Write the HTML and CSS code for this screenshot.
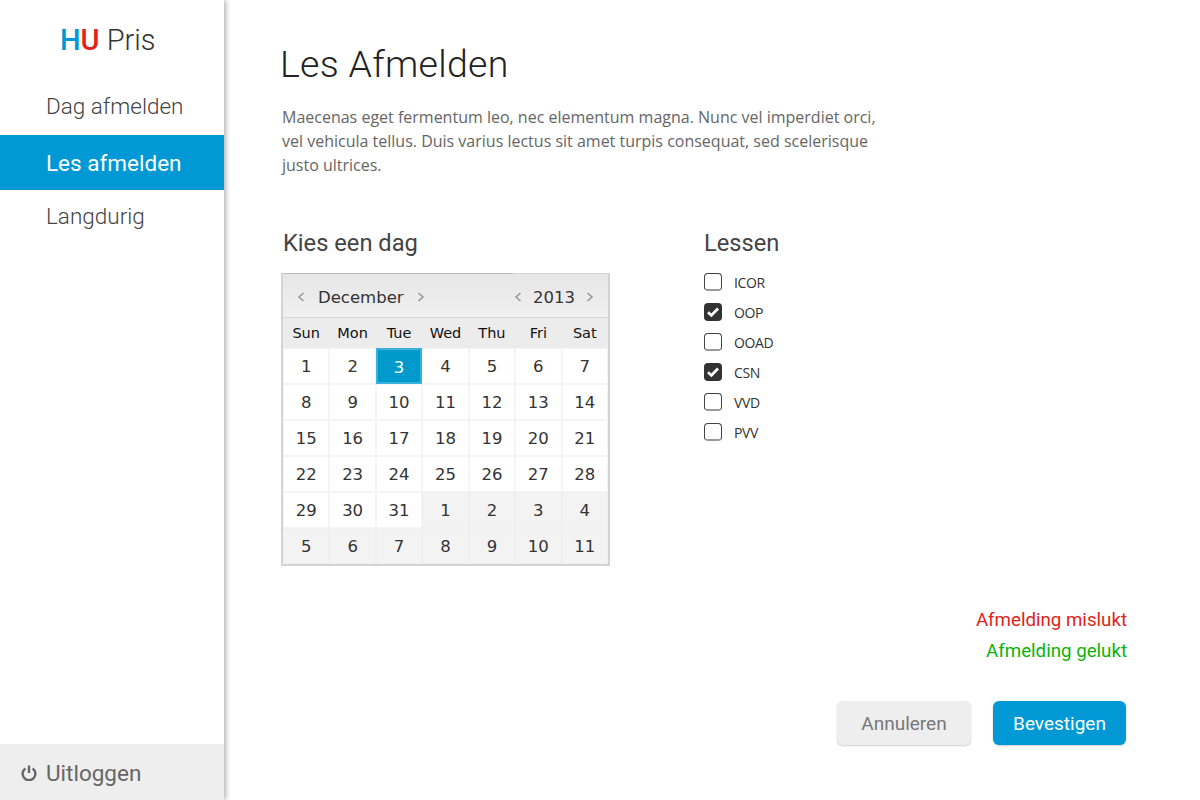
FILE: index.html
```html
<!DOCTYPE html>
<html lang="nl">
<head>
    <meta charset="UTF-8">
    <title>HU Pris - Les afmelden</title>
    <link rel="stylesheet" href="styles.css">
</head>
<body>
    <aside class="sidebar">
        <div class="logo"><span class="logo-h">H</span><span class="logo-u">U</span> Pris</div>
        <nav class="nav">
            <a class="nav-item" href="#">Dag afmelden</a>
            <a class="nav-item active" href="#">Les afmelden</a>
            <a class="nav-item" href="#">Langdurig</a>
        </nav>
        <a class="logout" href="#">
            <svg class="logout-icon" viewBox="0 0 16 16" width="16" height="16">
                <path d="M4.4 3.4a6.4 6.4 0 1 0 7.2 0" fill="none" stroke="#666" stroke-width="2.4"/>
                <path d="M8 0.5v7.5" fill="none" stroke="#666" stroke-width="2.4"/>
            </svg>
            Uitloggen
        </a>
    </aside>
    <main class="main">
        <h1 class="title">Les Afmelden</h1>
        <p class="intro">Maecenas eget fermentum leo, nec elementum magna. Nunc vel imperdiet orci, vel vehicula tellus. Duis varius lectus sit amet turpis consequat, sed scelerisque justo ultrices.</p>
        <div class="columns">
            <section class="col-date">
                <h2 class="sub">Kies een dag</h2>
                <div class="calendar">
                    <div class="cal-head">
                        <div class="cal-nav">
                            <svg class="chev" viewBox="0 0 8 10" width="8" height="10"><path d="M6.5 1L2 5l4.5 4" fill="none" stroke="#999" stroke-width="1.6"/></svg>
                            <span>December</span>
                            <svg class="chev" viewBox="0 0 8 10" width="8" height="10"><path d="M1.5 1L6 5 1.5 9" fill="none" stroke="#999" stroke-width="1.6"/></svg>
                        </div>
                        <div class="cal-nav year">
                            <svg class="chev" viewBox="0 0 8 10" width="8" height="10"><path d="M6.5 1L2 5l4.5 4" fill="none" stroke="#999" stroke-width="1.6"/></svg>
                            <span>2013</span>
                            <svg class="chev" viewBox="0 0 8 10" width="8" height="10"><path d="M1.5 1L6 5 1.5 9" fill="none" stroke="#999" stroke-width="1.6"/></svg>
                        </div>
                    </div>
                    <div class="cal-days">
                        <span>Sun</span><span>Mon</span><span>Tue</span><span>Wed</span><span>Thu</span><span>Fri</span><span>Sat</span>
                    </div>
                    <div class="cal-grid">
                        <span>1</span><span>2</span><span class="sel">3</span><span>4</span><span>5</span><span>6</span><span>7</span>
                        <span>8</span><span>9</span><span>10</span><span>11</span><span>12</span><span>13</span><span>14</span>
                        <span>15</span><span>16</span><span>17</span><span>18</span><span>19</span><span>20</span><span>21</span>
                        <span>22</span><span>23</span><span>24</span><span>25</span><span>26</span><span>27</span><span>28</span>
                        <span>29</span><span>30</span><span>31</span><span class="off">1</span><span class="off">2</span><span class="off">3</span><span class="off">4</span>
                        <span class="off">5</span><span class="off">6</span><span class="off">7</span><span class="off">8</span><span class="off">9</span><span class="off">10</span><span class="off">11</span>
                    </div>
                </div>
            </section>
            <section class="col-lessons">
                <h2 class="sub">Lessen</h2>
                <ul class="lessons">
                    <li><span class="box"></span>ICOR</li>
                    <li><span class="box checked"><svg viewBox="0 0 18 18" width="18" height="18"><path d="M4 9.2l3.4 3.2L14 5.6" fill="none" stroke="#fff" stroke-width="2.8"/></svg></span>OOP</li>
                    <li><span class="box"></span>OOAD</li>
                    <li><span class="box checked"><svg viewBox="0 0 18 18" width="18" height="18"><path d="M4 9.2l3.4 3.2L14 5.6" fill="none" stroke="#fff" stroke-width="2.8"/></svg></span>CSN</li>
                    <li><span class="box"></span>VVD</li>
                    <li><span class="box"></span>PVV</li>
                </ul>
            </section>
        </div>
        <div class="messages">
            <p class="msg fail">Afmelding mislukt</p>
            <p class="msg ok">Afmelding gelukt</p>
        </div>
        <div class="actions">
            <button class="btn cancel" type="button">Annuleren</button>
            <button class="btn confirm" type="submit">Bevestigen</button>
        </div>
    </main>
</body>
</html>
```

FILE: styles.css
```css
* {
    margin: 0;
    padding: 0;
    box-sizing: border-box;
}

body {
    display: flex;
    height: 800px;
    overflow: hidden;
    background-color: #fff;
    color: #444;
    font-family: 'Roboto', sans-serif;
}

a {
    text-decoration: none;
    color: inherit;
}

.sidebar {
    display: flex;
    flex-direction: column;
    width: 224px;
    flex-shrink: 0;
    box-shadow: 2px 0 5px rgba(0, 0, 0, 0.3);
}

.logo {
    height: 80px;
    padding: 22px 0 0 60px;
    font-size: 29px;
    line-height: 36px;
    font-weight: 300;
    color: #333;
}

.logo-h {
    color: #0099d5;
    font-weight: 500;
}

.logo-u {
    color: #e2231a;
    font-weight: 500;
}

.nav {
    flex: 1;
}

.nav-item {
    display: block;
    height: 55px;
    padding-left: 46px;
    font-size: 22.5px;
    line-height: 53px;
    font-weight: 300;
    color: #444;
}

.nav-item.active {
    background-color: #0099d5;
    color: #fff;
    font-weight: 400;
    line-height: 57px;
}

.logout {
    display: flex;
    align-items: center;
    gap: 9px;
    height: 56px;
    padding: 2px 0 0 21px;
    background-color: #eee;
    font-size: 22.5px;
    font-weight: 400;
    color: #666;
}

.main {
    flex: 1;
    padding: 41px 74px 55px 56px;
    display: flex;
    flex-direction: column;
}

.title {
    font-size: 37.5px;
    line-height: 46px;
    font-weight: 300;
    letter-spacing: 0.3px;
    color: #222;
}

.intro {
    width: 600px;
    margin-top: 18px;
    margin-left: 2px;
    font-family: 'Open Sans', sans-serif;
    font-size: 16px;
    line-height: 24px;
    color: #666;
}

.columns {
    display: flex;
    margin-top: 51px;
    margin-left: 1px;
}

.col-date {
    width: 423px;
}

.sub {
    margin-left: 2px;
    font-size: 23.7px;
    line-height: 30px;
    font-weight: 400;
    color: #444;
}

.col-lessons .sub {
    margin-left: 0;
}

.calendar {
    width: 329px;
    height: 293px;
    margin-top: 15px;
    border: 2px solid #d4d4d4;
    border-top-width: 1px;
    font-family: 'DejaVu Sans', sans-serif;
    color: #333;
}

.cal-head {
    position: relative;
    display: flex;
    justify-content: space-between;
    align-items: center;
    height: 44px;
    padding: 3px 14px 0 14px;
    background: linear-gradient(#e6e6e6, #f0f0f0);
    border-bottom: 1px solid #d8d8d8;
    font-size: 16.5px;
}

.cal-head::before {
    content: '';
    position: absolute;
    top: -1px;
    left: 0;
    width: 230px;
    height: 1px;
    background-color: #bbb;
}

.cal-nav {
    display: flex;
    align-items: center;
    gap: 13px;
}

.cal-nav.year {
    gap: 11px;
}

.chev {
    display: block;
}

.cal-days {
    display: grid;
    grid-template-columns: repeat(7, 1fr);
    height: 30px;
    background-color: #ececec;
    font-size: 14.5px;
    line-height: 30px;
    text-align: center;
    color: #111;
}

.cal-grid {
    display: grid;
    grid-template-columns: repeat(7, 1fr);
    grid-auto-rows: 36px;
    font-size: 16.5px;
    text-align: center;
}

.cal-grid span {
    line-height: 35px;
    background-color: #fff;
    border: 1px solid #f4f4f4;
}

.cal-grid .off {
    background-color: #f3f3f3;
    border-color: #efefef;
}

.cal-grid .sel {
    background-color: #0099cc;
    border: 2px solid #3cb0dc;
    color: #fff;
}

.lessons {
    margin-top: 9px;
    list-style: none;
    font-family: 'Open Sans', sans-serif;
    font-size: 14px;
    letter-spacing: -0.4px;
    color: #333;
}

.lessons li {
    display: flex;
    align-items: center;
    height: 30px;
}

.box {
    display: block;
    width: 18px;
    height: 18px;
    margin-right: 12px;
    border: 1px solid #444;
    border-bottom-width: 2px;
    border-bottom-color: #999;
    border-radius: 4px;
}

.box.checked {
    background-color: #333;
    border: 0;
}

.box svg {
    display: block;
}

.messages {
    margin: auto -1px 0 0;
    text-align: right;
    font-size: 18.7px;
    line-height: 31px;
    font-weight: 400;
}

.fail {
    color: #e2231a;
}

.ok {
    color: #0cb30c;
}

.actions {
    display: flex;
    justify-content: flex-end;
    gap: 22px;
    margin-top: 34px;
}

.btn {
    height: 44px;
    border: 0;
    border-radius: 6px;
    font-family: 'Roboto', sans-serif;
    font-size: 19px;
    box-shadow: 0 1px 2px rgba(0, 0, 0, 0.2);
}

.cancel {
    width: 134px;
    background-color: #eee;
    color: #777;
}

.confirm {
    width: 133px;
    background-color: #0099d5;
    color: #fff;
}
```
